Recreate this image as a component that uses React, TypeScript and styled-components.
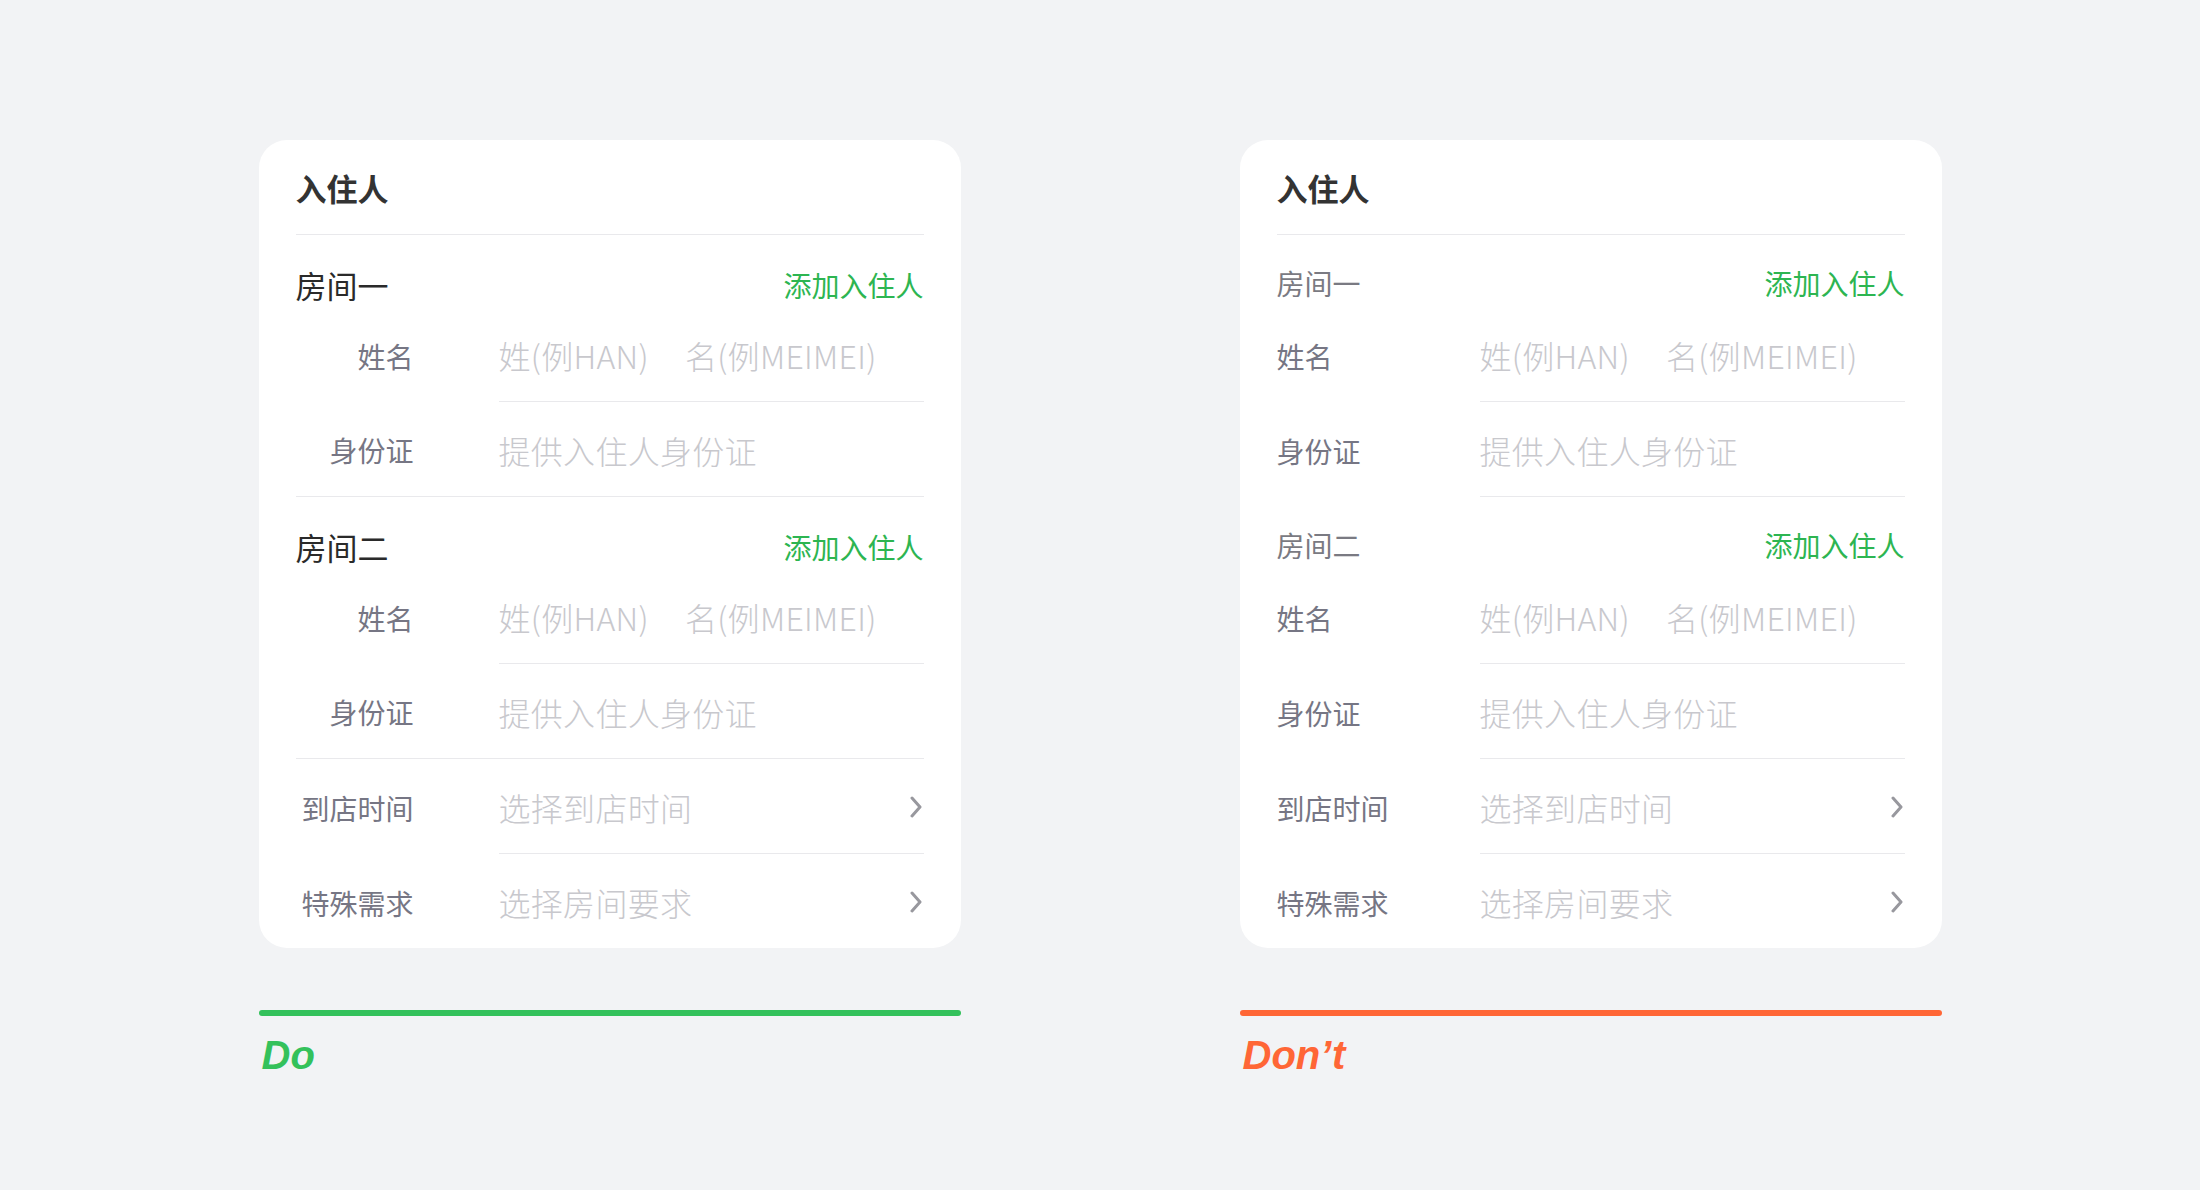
import React from 'react';
import styled, { createGlobalStyle } from 'styled-components';

const GlobalStyle = createGlobalStyle`
  html, body {
    margin: 0;
    padding: 0;
    background: #f2f3f5;
  }
  body {
    font-family: "Noto Sans CJK SC", "Noto Sans", sans-serif;
  }
`;

const Page = styled.div`
  width: 2200px;
  height: 1190px;
  box-sizing: border-box;
  padding-top: 140px;
  display: flex;
  justify-content: center;
  gap: 279px;
  background: #f2f3f5;
`;

const Column = styled.div`
  width: 702px;
  display: flex;
  flex-direction: column;
`;

const Card = styled.div`
  background: #fff;
  border-radius: 28px;
  padding: 0 37px 0 37px;
  height: 808px;
  box-sizing: border-box;
  overflow: hidden;
`;

const Header = styled.div`
  height: 95px;
  display: flex;
  align-items: center;
  border-bottom: 1px solid #e9e9ec;
  box-sizing: border-box;
  font-size: 31px;
  font-weight: 700;
  color: #333;
`;

const RoomHead = styled.div<{ $strong: boolean }>`
  height: 72px;
  box-sizing: border-box;
  padding-bottom: ${p => (p.$strong ? '5px' : '7px')};
  display: flex;
  align-items: flex-end;
  justify-content: space-between;
  line-height: 34px;
  font-size: ${p => (p.$strong ? '31px' : '28px')};
  color: ${p => (p.$strong ? '#2a2a2a' : '#7a7a82')};
`;

const AddLink = styled.span`
  font-size: 28px;
  color: #2db551;
`;

const Row = styled.div<{ $full: boolean }>`
  height: 95px;
  box-sizing: border-box;
  display: flex;
  border-bottom: ${p => (p.$full ? '1px solid #e9e9ec' : 'none')};
`;

const Label = styled.div<{ $right: boolean }>`
  width: 118px;
  margin-right: 85px;
  flex-shrink: 0;
  display: flex;
  align-items: center;
  justify-content: ${p => (p.$right ? 'flex-end' : 'flex-start')};
  padding-top: 2px;
  font-size: 28px;
  color: #767684;
  white-space: nowrap;
`;

const Value = styled.div<{ $line: boolean }>`
  flex: 1;
  display: flex;
  align-items: center;
  justify-content: space-between;
  padding-top: 1px;
  box-sizing: border-box;
  border-bottom: ${p => (p.$line ? '1px solid #e9e9ec' : 'none')};
`;

const Placeholders = styled.div`
  display: flex;
  gap: 36px;
`;

const Hint = styled.span`
  font-size: 32px;
  font-weight: 300;
  letter-spacing: 0.3px;
  color: #c8c8cd;
  white-space: nowrap;
`;

const Chevron = styled.svg`
  width: 12px;
  height: 22px;
  margin-right: 2px;
  flex-shrink: 0;
`;

const Bar = styled.div<{ $color: string }>`
  margin-top: 62px;
  height: 6px;
  border-radius: 3px;
  background: ${p => p.$color};
`;

const Verdict = styled.div<{ $color: string }>`
  margin-top: 19px;
  padding-left: 3px;
  font-family: "Liberation Sans", Arial, sans-serif;
  font-style: italic;
  font-weight: 700;
  font-size: 40px;
  line-height: 40px;
  color: ${p => p.$color};
`;

type Divider = 'full' | 'inset' | 'none';

function Arrow() {
  return (
    <Chevron viewBox="0 0 12 22">
      <path d="M2 2 L10 11 L2 20" fill="none" stroke="#98989e" strokeWidth="3" strokeLinecap="round" strokeLinejoin="round" />
    </Chevron>
  );
}

function Field({
  label,
  divider,
  right,
  arrow,
  children,
}: {
  label: string;
  divider: Divider;
  right: boolean;
  arrow?: boolean;
  children: React.ReactNode;
}) {
  return (
    <Row $full={divider === 'full'}>
      <Label $right={right}>{label}</Label>
      <Value $line={divider === 'inset'}>
        {children}
        {arrow && <Arrow />}
      </Value>
    </Row>
  );
}

function Room({ title, good }: { title: string; good: boolean }) {
  return (
    <>
      <RoomHead $strong={good}>
        <span>{title}</span>
        <AddLink>添加入住人</AddLink>
      </RoomHead>
      <Field label="姓名" divider="inset" right={good}>
        <Placeholders>
          <Hint>姓(例HAN)</Hint>
          <Hint>名(例MEIMEI)</Hint>
        </Placeholders>
      </Field>
      <Field label="身份证" divider={good ? 'full' : 'inset'} right={good}>
        <Hint>提供入住人身份证</Hint>
      </Field>
    </>
  );
}

function GuestCard({ good }: { good: boolean }) {
  return (
    <Card>
      <Header>入住人</Header>
      <Room title="房间一" good={good} />
      <Room title="房间二" good={good} />
      <Field label="到店时间" divider="inset" right={good} arrow>
        <Hint>选择到店时间</Hint>
      </Field>
      <Field label="特殊需求" divider="none" right={good} arrow>
        <Hint>选择房间要求</Hint>
      </Field>
    </Card>
  );
}

export default function App() {
  return (
    <>
      <GlobalStyle />
      <Page>
        <Column>
          <GuestCard good={true} />
          <Bar $color="#34c15b" />
          <Verdict $color="#34c15b">Do</Verdict>
        </Column>
        <Column>
          <GuestCard good={false} />
          <Bar $color="#ff6636" />
          <Verdict $color="#ff6636">Don’t</Verdict>
        </Column>
      </Page>
    </>
  );
}
